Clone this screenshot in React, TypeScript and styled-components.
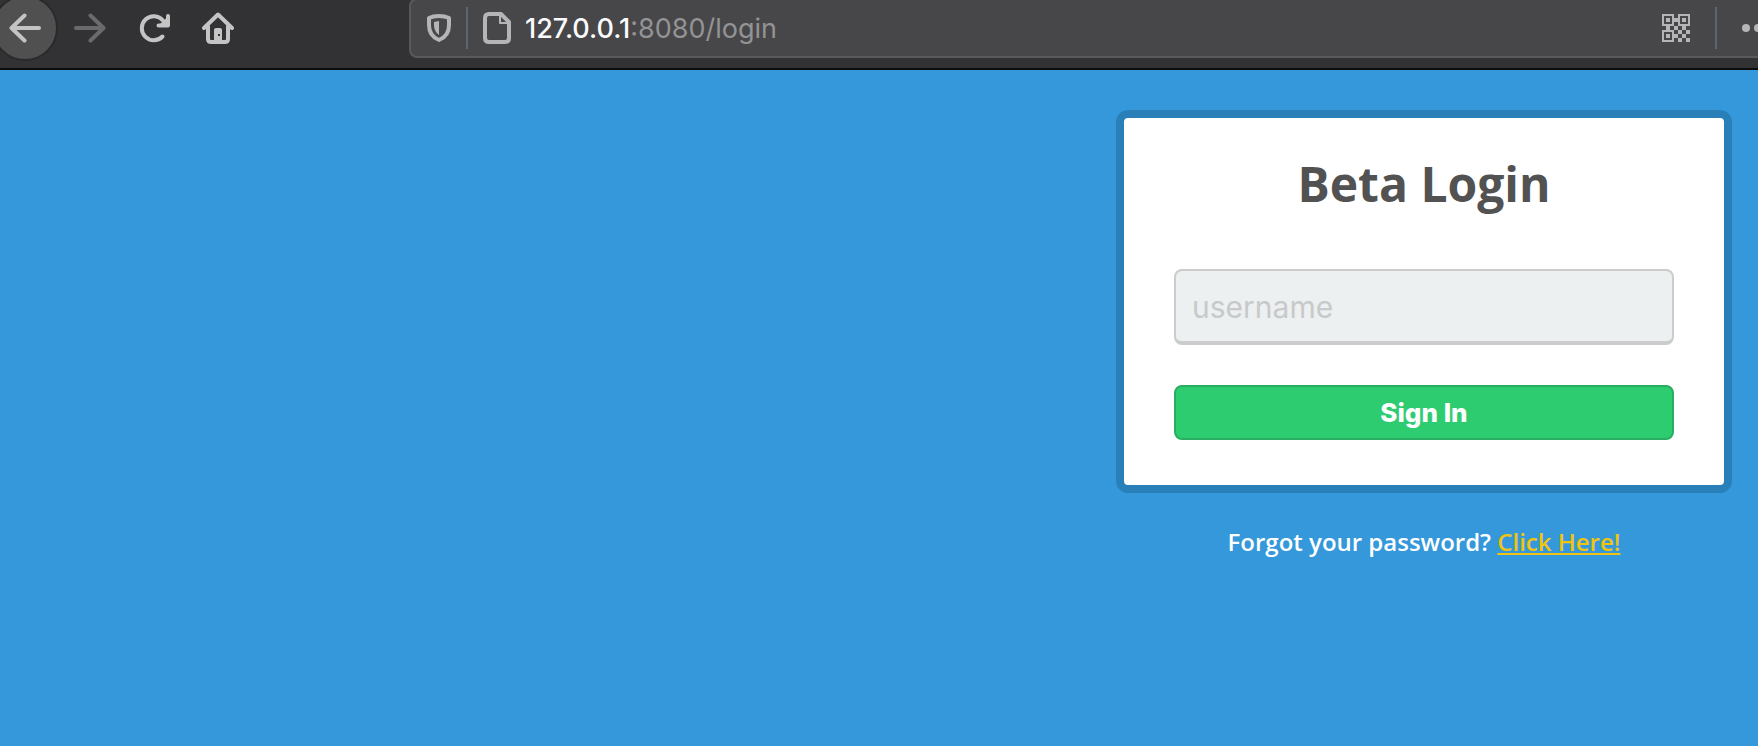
import React from "react";
import styled, { createGlobalStyle } from "styled-components";

const GlobalStyle = createGlobalStyle`
  *, *::before, *::after { box-sizing: border-box; }
  body { margin: 0; background: #3498db; }
`;

const Page = styled.div`
  min-height: 100vh;
  overflow: hidden;
  background: #3498db;
  font-family: "Open Sans", sans-serif;
`;

/* Browser toolbar, cut off by the window at the top and both sides */
const Toolbar = styled.header`
  display: flex;
  align-items: center;
  margin: -5px 0 0 -8px;
  padding-bottom: 7px;
  background: #323234;
  border-bottom: 2px solid #0c0c0d;
`;

const Nav = styled.nav`
  display: flex;
  flex: none;
  align-items: center;
  width: 417px;
`;

const NavButton = styled.button<{ $round?: boolean }>`
  display: flex;
  flex: none;
  align-items: center;
  justify-content: center;
  width: ${(p) => (p.$round ? 66 : 64)}px;
  height: 66px;
  padding: 0;
  border: ${(p) => (p.$round ? "2px solid #2a2a2c" : "0")};
  border-radius: 50%;
  background: ${(p) => (p.$round ? "#505050" : "transparent")};
  color: #c4c4c5;

  &:disabled { color: #6a6a6c; }
`;

const AddressBar = styled.div`
  display: flex;
  flex: 1;
  align-items: center;
  min-width: 0;
  height: 60px;
  padding-left: 16px;
  margin-right: -40px;
  border: 2px solid #59595b;
  border-radius: 8px;
  background: #474749;
  color: #b5b5b7;
`;

const Divider = styled.span`
  flex: none;
  width: 2px;
  height: 42px;
  background: #5f656e;
`;

const IconButton = styled.button`
  display: flex;
  flex: none;
  padding: 0;
  border: 0;
  background: none;
  color: inherit;
`;

const SiteTools = styled.div`
  display: flex;
  flex: none;
  align-items: center;
  gap: 15px;
`;

const Address = styled.div`
  flex: 1;
  min-width: 0;
  margin-left: 14px;
  padding-top: 2px;
  overflow: hidden;
  white-space: nowrap;
  outline: 0;
  font: 400 27px/36px Inter, sans-serif;
  color: #939395;
`;

const Host = styled.span`
  font-weight: 500;
  color: #fbfbfe;
`;

const PageTools = styled.div`
  display: flex;
  flex: none;
  align-items: center;
  gap: 25px;
  padding-right: 22px;
`;

const Main = styled.main`
  display: flex;
  justify-content: flex-end;
  padding: 40px 26px;
`;

const LoginColumn = styled.div`
  width: 100%;
  max-width: 616px;
`;

const Card = styled.form`
  padding: 30px 50px 45px;
  border: 8px solid #2980b9;
  border-radius: 12px;
  background: #fff;
`;

const Title = styled.h1`
  margin: 0 0 49px;
  font-size: 48px;
  line-height: 72px;
  font-weight: 700;
  text-align: center;
  color: #525252;
`;

const UsernameField = styled.input`
  display: block;
  width: 100%;
  height: 76px;
  margin-bottom: 40px;
  padding: 2px 16px 0;
  border: 2px solid #ccc;
  border-bottom-width: 4px;
  border-radius: 8px;
  background: #ecf0f1;
  font: 400 30px/36px "Inter", sans-serif;
  color: #525252;

  &::placeholder { color: #c8c9ca; opacity: 1; }
`;

const SignInButton = styled.button`
  display: block;
  width: 100%;
  height: 55px;
  padding: 0;
  border: 2px solid #27ae60;
  border-radius: 8px;
  background: #2ecc71;
  font: 800 26px/32px "Inter", sans-serif;
  color: #fff;
`;

const Forgot = styled.p`
  margin: 31px 0 0;
  font-size: 24px;
  line-height: 36px;
  font-weight: 600;
  text-align: center;
  color: #fff;
`;

const ForgotLink = styled.a`
  color: #f1c40f;
  text-decoration: underline;
`;

const stroke = {
  fill: "none",
  stroke: "currentColor",
  strokeWidth: 4,
  strokeLinecap: "round" as const,
  strokeLinejoin: "round" as const,
};

const BackIcon = () => (
  <svg width="32" height="32" viewBox="0 0 32 32" {...stroke}>
    <path d="M30 16H2.5M15.5 3.5L2.5 16L15.5 28.5" />
  </svg>
);

const ForwardIcon = () => (
  <svg width="32" height="32" viewBox="0 0 32 32" {...stroke}>
    <path d="M2 16H29.5M16.5 3.5L29.5 16L16.5 28.5" />
  </svg>
);

const ReloadIcon = () => (
  <svg width="32" height="32" viewBox="0 0 32 32" {...stroke}>
    <path d="M24.5 24.5A12 12 0 1 1 25 8.5" />
    <path d="M30 4V13.500H20.500" />
    <path d="M30 5L21 13.500H30Z" fill="currentColor" strokeWidth="1" />
  </svg>
);

const HomeIcon = () => (
  <svg width="32" height="32" viewBox="0 0 32 32" {...stroke}>
    <path d="M2 16L16 2.5L30 16M6 14V27Q6 30 9 30H23Q26 30 26 27V14" />
    <path
      d="M12 28V18Q12 16 14 16H18Q20 16 20 18V28Z M16 22H18V24H16Z"
      fill="currentColor"
      fillRule="evenodd"
      stroke="none"
    />
  </svg>
);

const ShieldIcon = () => (
  <svg width="24" height="28" viewBox="0 0 24 28" {...stroke}>
    <path d="M12 2C8.5 2 5 2.5 2 4V11C2 18 5.5 23.5 12 26C18.5 23.5 22 18 22 11V4C19 2.5 15.5 2 12 2Z" />
    <path d="M12 7V21C8.5 18.5 7 15 7 11V8Z" fill="currentColor" stroke="none" />
  </svg>
);

const PageIcon = () => (
  <svg width="28" height="32" viewBox="0 0 28 32" {...stroke}>
    <path d="M18 2H6Q2 2 2 6V26Q2 30 6 30H22Q26 30 26 26V10Z" />
    <path d="M17 3V11H25" strokeWidth="2" />
  </svg>
);

const QrIcon = () => (
  <svg width="28" height="28" viewBox="0 0 28 28" fill="currentColor">
    {[[0, 0], [16, 0], [0, 16]].map(([x, y]) => (
      <path
        key={`${x}-${y}`}
        fillRule="evenodd"
        d={`M${x} ${y}h12v12h-12zM${x + 2} ${y + 2}v8h8v-8zM${x + 4} ${y + 4}h4v4h-4z`}
      />
    ))}
    <path d="M12 4h4v4h-4zM12 12h4v4h-4zM4 12h4v4h-4zM20 12h4v4h-4zM16 16h4v4h-4zM24 16h4v4h-4zM12 20h4v4h-4zM20 20h4v4h-4zM16 24h4v4h-4zM24 24h4v4h-4z" />
  </svg>
);

const MoreIcon = () => (
  <svg width="32" height="8" viewBox="0 0 32 8" fill="currentColor">
    <circle cx="4" cy="4" r="4" />
    <circle cx="16" cy="4" r="4" />
    <circle cx="28" cy="4" r="4" />
  </svg>
);

export default function App() {
  return (
    <Page>
      <GlobalStyle />
      <Toolbar>
        <Nav aria-label="Browser">
          <NavButton $round type="button" aria-label="Back"><BackIcon /></NavButton>
          <NavButton type="button" aria-label="Forward" disabled><ForwardIcon /></NavButton>
          <NavButton type="button" aria-label="Reload"><ReloadIcon /></NavButton>
          <NavButton type="button" aria-label="Home"><HomeIcon /></NavButton>
        </Nav>
        <AddressBar>
          <SiteTools>
            <IconButton type="button" aria-label="Tracking protection"><ShieldIcon /></IconButton>
            <Divider />
            <IconButton type="button" aria-label="Site information"><PageIcon /></IconButton>
          </SiteTools>
          <Address role="textbox" aria-label="Address" contentEditable suppressContentEditableWarning spellCheck={false}>
            <Host>127.0.0.1</Host>:8080/login
          </Address>
          <PageTools>
            <IconButton type="button" aria-label="Show QR code"><QrIcon /></IconButton>
            <Divider />
            <IconButton type="button" aria-label="Page actions"><MoreIcon /></IconButton>
          </PageTools>
        </AddressBar>
      </Toolbar>
      <Main>
        <LoginColumn>
          <Card onSubmit={(e) => e.preventDefault()}>
            <Title>Beta Login</Title>
            <UsernameField type="text" name="username" placeholder="username" aria-label="username" />
            <SignInButton type="submit">Sign In</SignInButton>
          </Card>
          <Forgot>
            Forgot your password? <ForgotLink href="#forgot">Click Here!</ForgotLink>
          </Forgot>
        </LoginColumn>
      </Main>
    </Page>
  );
}
